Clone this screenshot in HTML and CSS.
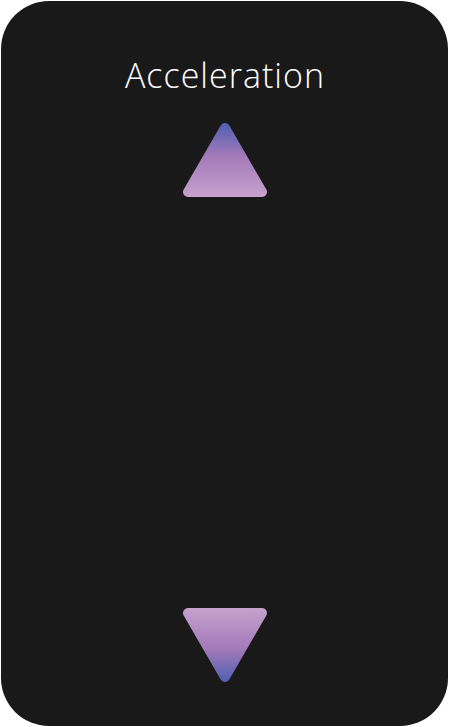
FILE: index.html
```html
<!DOCTYPE html>
<html>
<head>
<meta charset="utf-8">
<link rel="stylesheet" href="styles.css">
</head>
<body>
<div class="card">
  <h1 class="title">Acceleration</h1>
  <button class="arrow arrow-up" aria-label="Increase">
    <svg width="84" height="74" viewBox="0 0 84 74">
      <defs>
        <linearGradient id="gu" x1="0" y1="0" x2="0" y2="74" gradientUnits="userSpaceOnUse">
          <stop offset="0" stop-color="#4f5fb2"/>
          <stop offset="0.45" stop-color="#a47ab9"/>
          <stop offset="1" stop-color="#c6a2cd"/>
        </linearGradient>
      </defs>
      <polygon points="42,5 79,69 5,69" fill="url(#gu)" stroke="url(#gu)" stroke-width="10" stroke-linejoin="round"/>
    </svg>
  </button>
  <div class="spacer"></div>
  <button class="arrow arrow-down" aria-label="Decrease">
    <svg width="84" height="74" viewBox="0 0 84 74">
      <defs>
        <linearGradient id="gd" x1="0" y1="0" x2="0" y2="74" gradientUnits="userSpaceOnUse">
          <stop offset="0" stop-color="#c6a2cd"/>
          <stop offset="0.55" stop-color="#a47ab9"/>
          <stop offset="1" stop-color="#4f5fb2"/>
        </linearGradient>
      </defs>
      <polygon points="5,5 79,5 42,69" fill="url(#gd)" stroke="url(#gd)" stroke-width="10" stroke-linejoin="round"/>
    </svg>
  </button>
</div>
</body>
</html>
```
FILE: styles.css
```css
html, body {
  margin: 0;
  padding: 0;
  background: #ffffff;
}
body {
  padding: 1px;
  width: 447px;
  height: 725px;
}
.card {
  box-sizing: border-box;
  width: 447px;
  height: 725px;
  background: #191919;
  border-radius: 48px;
  display: flex;
  flex-direction: column;
  align-items: center;
  padding: 54px 0 44px;
}
.title {
  margin: 0;
  padding-left: 1px;
  font-family: "Open Sans", "Liberation Sans", sans-serif;
  font-weight: 300;
  font-size: 34px;
  line-height: 40px;
  letter-spacing: 1px;
  color: #ffffff;
}
.arrow {
  background: none;
  border: 0;
  padding: 0;
  display: block;
  width: 84px;
  height: 74px;
}
.arrow svg {
  display: block;
}
.arrow-up {
  margin-top: 28px;
}
.spacer {
  flex: 1;
}
```
